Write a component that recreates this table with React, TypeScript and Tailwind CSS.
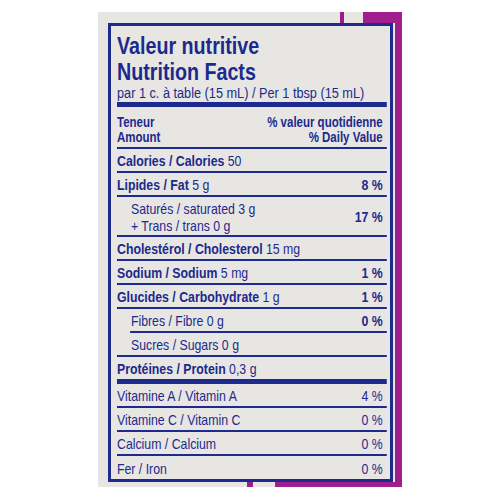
import React from "react";

type RowProps = {
  label: string;
  value?: string;
  pct?: string;
  bold?: boolean;
  indent?: boolean;
  line?: "thin" | "thick" | "indent" | "none";
};

function Row({ label, value, pct, bold = true, indent = false, line = "thin" }: RowProps) {
  const text = (
    <>
      <span className="whitespace-pre">
        <span className={bold ? "font-bold" : ""}>{label}</span>
        {value ? <span> {value}</span> : null}
      </span>
      {pct ? <span className={bold || line === "indent" ? "font-bold" : ""}>{pct}</span> : null}
    </>
  );

  if (line === "indent") {
    return (
      <div className="h-[24px]">
        <div className="ml-[16px] flex h-[24px] items-center justify-between border-b-2 border-[#1d2a8e] pt-[3px] pr-[5px] pl-px">
          {text}
        </div>
      </div>
    );
  }

  const h =
    line === "thick"
      ? "h-[27px] border-b-[5px] border-[#1d2a8e]"
      : line === "thin"
      ? "h-[24px] border-b-2 border-[#1d2a8e]"
      : "h-[23px]";

  return (
    <div className={`flex items-center justify-between pt-[3px] pr-[5px] ${indent ? "pl-[17px]" : ""} ${h}`}>
      {text}
    </div>
  );
}

export default function App() {
  return (
    <main className="min-h-[500px] w-[500px] bg-white pt-[12px] pl-[98px] font-['Liberation_Sans',Arial,sans-serif] text-[#1b2a8c]">
      <div className="flex h-[475px] w-[304px] flex-col bg-[#e8e6e3]">
        {/* top strip */}
        <div className="flex h-[11px] shrink-0">
          <div className="w-[242px]" />
          <div className="w-[4px] bg-[#9c1c8c]" />
          <div className="w-[19px]" />
          <div className="flex-1 bg-[#a01e8e]" />
        </div>

        {/* middle */}
        <div className="flex flex-1">
          <div className="w-[10px]" />
          <div className="w-[285px] overflow-visible border-[3px] border-[#1d2a8e] pt-[7px] pl-[6px]">
            {/* condensed type: lay out wide, squeeze horizontally */}
            <div className="w-[329px] origin-left scale-x-[0.82]">
              <div className="text-[24px] leading-[26px] font-bold">
                <div>Valeur nutritive</div>
                <div>Nutrition Facts</div>
              </div>
              <div className="text-[15.5px] leading-[16px] whitespace-nowrap">
                par 1 c. à table (15 mL) / Per 1 tbsp (15 mL)
              </div>
              <div className="mt-px h-[5px] bg-[#1d2a8e]" />

              <div className="flex justify-between border-b-2 border-[#1d2a8e] pt-[8px] pb-[2px] pr-[5px] text-[14px] leading-[15px] font-bold">
                <div>
                  <div>Teneur</div>
                  <div>Amount</div>
                </div>
                <div className="text-right">
                  <div>% valeur quotidienne</div>
                  <div>% Daily Value</div>
                </div>
              </div>

              <div className="text-[15px]">
                <Row label="Calories / Calories" value="50" />
                <Row label="Lipides / Fat" value="5 g" pct="8 %" />
                <div className="flex h-[40px] items-center justify-between border-b-2 border-[#1d2a8e] pt-[2px] pr-[5px] pl-[17px]">
                  <div className="leading-[17px]">
                    <div>Saturés / saturated 3 g</div>
                    <div>+ Trans / trans 0 g</div>
                  </div>
                  <span className="font-bold">17 %</span>
                </div>
                <Row label="Cholestérol / Cholesterol" value="15 mg" />
                <Row label="Sodium / Sodium" value="5 mg" pct="1 %" />
                <Row label="Glucides / Carbohydrate" value="1 g" pct="1 %" />
                <Row label="Fibres / Fibre" value="0 g" pct="0 %" bold={false} line="indent" />
                <Row label="Sucres / Sugars" value="0 g" bold={false} indent />
                <Row label="Protéines / Protein" value="0,3 g" line="thick" />
                <Row label="Vitamine A / Vitamin A" pct="4 %" bold={false} />
                <Row label="Vitamine C / Vitamin C" pct="0 %" bold={false} />
                <Row label="Calcium / Calcium" pct="0 %" bold={false} />
                <Row label="Fer / Iron" pct="0 %" bold={false} line="none" />
              </div>
            </div>
          </div>
          <div className="w-[2px]" />
          <div className="flex-1 bg-[#a01e8e]" />
        </div>

        {/* bottom strip */}
        <div className="flex h-[5px] shrink-0">
          <div className="w-[149px]" />
          <div className="w-[6px] bg-[#9c1c8c]" />
          <div className="w-[22px]" />
          <div className="flex-1 bg-[#a01e8e]" />
        </div>
      </div>
    </main>
  );
}
